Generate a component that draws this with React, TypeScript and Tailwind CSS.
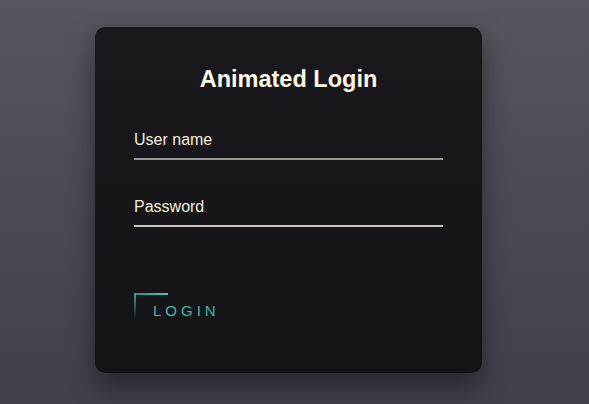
import React from "react";

export default function App() {
  return (
    <div
      className="w-[589px] h-[404px] overflow-hidden flex justify-center pr-[12px] pt-[27px] bg-gradient-to-b from-[#56565e] to-[#40404c]"
      style={{ fontFamily: '"Liberation Sans", Arial, sans-serif' }}
    >
      <div className="w-[387px] h-[346px] rounded-[10px] bg-gradient-to-b from-[#19181c] to-[#141417] shadow-[0_12px_28px_rgba(0,0,0,0.45)] px-[39px] pt-[38px] flex flex-col">
        <h1 className="text-center text-[23.5px] leading-[28px] font-bold text-[#fff8e6]">
          Animated Login
        </h1>
        <div className="mt-[38px]">
          <div className="text-[16px] leading-[18px] text-[#f3eedc]">User name</div>
          <div className="mt-[9px] h-[2px] bg-[#9a9894]" />
        </div>
        <div className="mt-[38px]">
          <div className="text-[16px] leading-[18px] text-[#f3eedc]">Password</div>
          <div className="mt-[9px] h-[2px] bg-[#c9c5bb]" />
        </div>
        <div className="mt-[66px] relative w-[90px] h-[28px]">
          <div className="absolute left-0 top-0 w-[34px] h-[2px] bg-gradient-to-r from-[#2f8f84] to-[#4fc6b6]" />
          <div className="absolute left-0 top-0 w-[2px] h-[26px] bg-gradient-to-b from-[#3aa89a] to-transparent" />
          <span className="absolute left-[19px] top-[9px] text-[15px] leading-[18px] tracking-[4px] text-[#3fbcab]">
            LOGIN
          </span>
        </div>
      </div>
    </div>
  );
}
